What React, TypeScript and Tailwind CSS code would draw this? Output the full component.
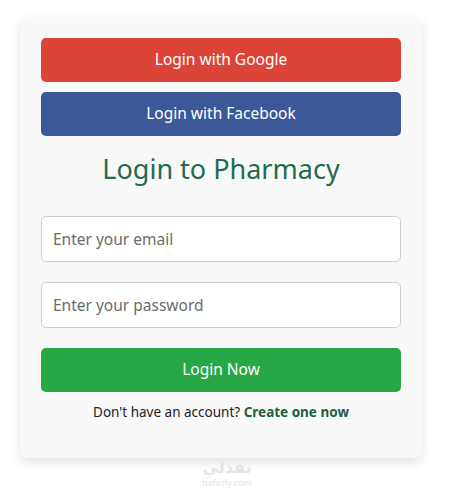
import React from 'react';

const App = () => {
  return (
    <div
      className="min-h-[488px] w-[454px] bg-white pt-[18px]"
      style={{ fontFamily: '"Noto Sans", "Open Sans", sans-serif' }}
    >
      <div className="ml-[20px] w-[402px] rounded-lg bg-[#f8f8f8] px-[21px] pt-[20px] pb-[36px] shadow-[0_4px_12px_rgba(0,0,0,0.12)]">
        <button className="flex h-[44px] w-full items-center justify-center rounded-[5px] bg-[#db4437] text-[15.5px] text-white">
          Login with Google
        </button>
        <button className="mt-[10px] flex h-[44px] w-full items-center justify-center rounded-[5px] bg-[#3b5998] text-[15.5px] text-white">
          Login with Facebook
        </button>
        <h2 className="mt-[13px] text-center text-[27px] leading-[40px] text-[#236b4c]">
          Login to Pharmacy
        </h2>
        <form className="mt-[27px] flex flex-col">
          <input
            type="email"
            placeholder="Enter your email"
            className="h-[46px] w-full rounded-[5px] border border-[#cfcfcf] bg-white px-[11px] text-[15.5px] placeholder:text-[#6c6c6c] outline-none"
          />
          <input
            type="password"
            placeholder="Enter your password"
            className="mt-[20px] h-[46px] w-full rounded-[5px] border border-[#cfcfcf] bg-white px-[11px] text-[15.5px] placeholder:text-[#6c6c6c] outline-none"
          />
          <button
            type="button"
            className="mt-[20px] flex h-[44px] w-full items-center justify-center rounded-[5px] bg-[#28a745] text-[15.5px] text-white"
          >
            Login Now
          </button>
        </form>
        <p className="mt-[10px] text-center text-[13.5px] text-[#222]">
          Don't have an account?{' '}
          <a href="#" className="font-bold text-[#1f5e40]">
            Create one now
          </a>
        </p>
      </div>
      <div className="flex flex-col items-center gap-[2px] pt-[1px] text-[#e4e4e4]">
        <span className="text-[16px] font-bold leading-[17px]" style={{ fontFamily: '"DejaVu Sans", sans-serif' }}>نفذلي</span>
        <span className="text-[9px] leading-[10px]">nafezly.com</span>
      </div>
    </div>
  );
};

export default App;
